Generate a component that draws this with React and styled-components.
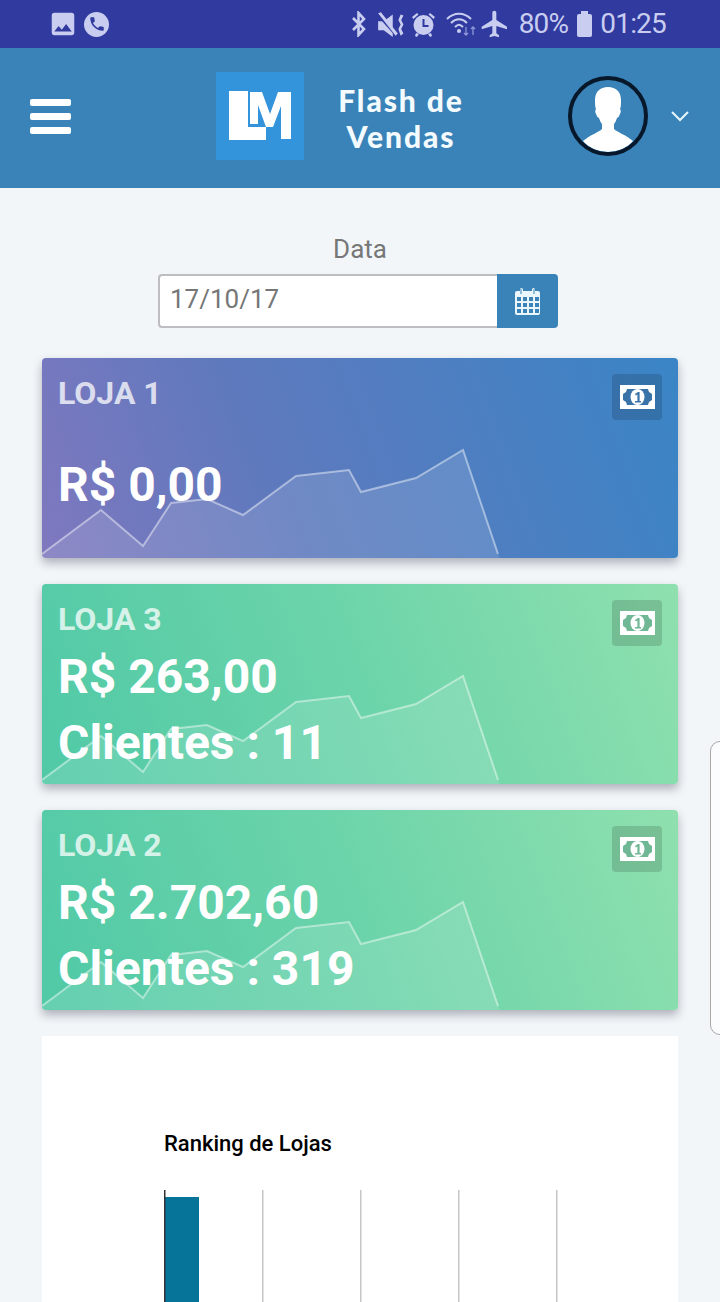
import React from 'react';
import styled, { createGlobalStyle } from 'styled-components';
import { MdImage, MdFlight, MdPhone } from 'react-icons/md';

const GlobalStyle = createGlobalStyle`
  html, body {
    margin: 0;
    padding: 0;
    height: 1302px;
    overflow: hidden;
    background: #f2f6f9;
    font-family: 'Roboto', 'Liberation Sans', sans-serif;
  }
  * { box-sizing: border-box; }
`;

const stores = [
  { name: 'LOJA 1', value: 'R$ 0,00', tone: 'blue' },
  { name: 'LOJA 3', value: 'R$ 263,00', clients: 11, tone: 'green' },
  { name: 'LOJA 2', value: 'R$ 2.702,60', clients: 319, tone: 'green' },
];

const sparkPoints = '0,196 59,152 101,188 129,145 165,141 201,157 254,118 307,112 319,134 374,120 421,92 456,196';

const Wave = () => (
  <Spark viewBox="0 0 636 200">
    <polygon points={`0,200 ${sparkPoints} 458,200`} fill="rgba(255,255,255,.12)" />
    <polyline points={sparkPoints} fill="none" stroke="rgba(255,255,255,.45)" strokeWidth="2" />
  </Spark>
);

const MoneyIcon = ({ tone }) => (
  <svg width="35" height="24" viewBox="0 0 35 24">
    <rect width="35" height="24" fill="#fff" />
    <path
      d="M7 4h21l1 3 3 2v6l-3 2-1 3H7l-1-3-3-2V9l3-2z"
      fill={tone === 'blue' ? '#3a73a8' : '#6fb795'}
    />
    <ellipse cx="17.5" cy="12" rx="7" ry="8" fill="#fff" />
    <path d="M15 9l3-2h1.6v9H21v1.6h-6V16h2.4V9.4L15.800 10.600z" fill={tone === 'blue' ? '#3a73a8' : '#6fb795'} />
  </svg>
);

const CalendarIcon = () => (
  <svg width="25" height="27" viewBox="0 0 25 27" fill="#eaf6fc">
    <path d="M2 3h3V1.500a1.500 1.500 0 0 1 3 0V3h9V1.500a1.500 1.500 0 0 1 3 0V3h3a2 2 0 0 1 2 2v20a2 2 0 0 1-2 2H2a2 2 0 0 1-2-2V5a2 2 0 0 1 2-2z" />
    <g fill="#3a83b9">
      {[9, 15, 21].map(y =>
        [2, 8, 14, 20].map(x => <rect key={`${x}-${y}`} x={x} y={y} width="4" height="4" />)
      )}
      <rect x="5.500" y="1" width="1" height="5" />
      <rect x="18.500" y="1" width="1" height="5" />
    </g>
  </svg>
);

const Avatar = () => (
  <AvatarRing>
    <svg width="72" height="72" viewBox="0 0 72 72">
      <path
        fill="#fff"
        d="M36 7c-8 0-13 5-13 13 0 4 0 7 1 9-1 1-1 3 0 5 1 2 1 3 3 4 1 3 2 5 3 6v5c-3 3-12 6-19 12 6 7 15 11 25 11s19-4 25-11c-7-6-16-9-19-12v-5c1-1 2-3 3-6 2-1 2-2 3-4 1-2 1-4 0-5 1-2 1-5 1-9 0-8-5-13-13-13z"
      />
    </svg>
  </AvatarRing>
);

const App = () => (
  <Page>
    <GlobalStyle />
    <StatusBar>
      <StatusGroup>
        <MdImage size={30} style={{ margin: '0 -3px' }} />
        <PhoneBadge><MdPhone size={18} /></PhoneBadge>
      </StatusGroup>
      <StatusGroup>
        <Glyph $gap={0} width="16" height="26" viewBox="0 0 16 26">
          <path d="M2 7l11 11-5.500 6V2L13 8 2 19" fill="none" stroke="#c9cdf0" strokeWidth="2.600" />
        </Glyph>
        <Glyph $gap={10} width="27" height="25" viewBox="0 0 24 22" fill="#c9cdf0">
          <path d="M1 8h5l8-6v20l-8-6H1z" />
          <path d="M0 2l2-2 17 19-2 2z" fill="#303a9f" transform="translate(0 1)" />
          <path d="M1 1l2.500-1 15 19-2 2z" />
          <path d="M21 2l2.500 1-2 4 2 4-2 4 2 4-2.500 2-2-6 2-4-2-4z" />
        </Glyph>
        <Glyph $gap={7} width="25" height="26" viewBox="0 0 25 26" fill="#c9cdf0">
          <circle cx="12.500" cy="14" r="10" />
          <path d="M1 6l5-4 1.500 1.500-5 4.500zM24 6l-5-4-1.500 1.500 5 4.500zM5 22l3 1-2 3-2-1zM20 22l-3 1 2 3 2-1z" />
          <path d="M12.500 8v7h5" fill="none" stroke="#303a9f" strokeWidth="2" />
        </Glyph>
        <Glyph $gap={10} width="31" height="26" viewBox="0 0 31 26" fill="none" stroke="#c9cdf0" strokeWidth="2">
          <path d="M1 8c7-7 17-7 24 0M5 12c5-5 11-5 16 0M9 16c3-3 5-3 8 0" />
          <circle cx="13" cy="20" r="2" fill="#c9cdf0" stroke="none" />
          <path d="M20 16v8M18 22l2 2 2-2M27 24v-8M25 18l2-2 2 2" strokeWidth="1.300" stroke="#8f97d8" />
        </Glyph>
        <MdFlight size={32} style={{ margin: '0 -3px 0 2px' }} />
        <StatusText $gap={11}>80%</StatusText>
        <Battery />
        <StatusText $gap={8}>01:25</StatusText>
      </StatusGroup>
    </StatusBar>

    <Header>
      <Burger><span /><span /><span /></Burger>
      <Logo>
        <svg width="88" height="88" viewBox="0 0 88 88" fill="#fff">
          <path d="M13 19h19v36h18v13H13z" />
          <path d="M34 20h12l8 22 8-22h13v47H65V34l-8 21h-7l-8-22v19h-8z" />
        </svg>
      </Logo>
      <AppTitle><span>Flash de</span><span>Vendas</span></AppTitle>
      <Avatar />
      <Chevron viewBox="0 0 20 14">
        <path d="M2 3l8 8 8-8" fill="none" stroke="#e8f6fc" strokeWidth="2" />
      </Chevron>
    </Header>

    <Content>
      <DateField>
        <DateLabel>Data</DateLabel>
        <DateRow>
          <DateInput readOnly value="17/10/17" />
          <DateButton><CalendarIcon /></DateButton>
        </DateRow>
      </DateField>

      <CardList>
        {stores.map(store => (
          <StoreCard key={store.name} $tone={store.tone}>
            <CardHead>
              <StoreName>{store.name}</StoreName>
              <IconBox><MoneyIcon tone={store.tone} /></IconBox>
            </CardHead>
            <Amount $alone={store.clients === undefined}>{store.value}</Amount>
            {store.clients !== undefined && <Amount>Clientes : {store.clients}</Amount>}
            <Wave />
          </StoreCard>
        ))}
      </CardList>

      <ChartPanel>
        <ChartTitle>Ranking de Lojas</ChartTitle>
        <svg width="420" height="112" viewBox="0 0 420 112">
          {[98, 196, 294, 392].map(x => (
            <rect key={x} x={x} y="0" width="1.500" height="112" fill="#c6c6c6" />
          ))}
          <rect x="1" y="7" width="34" height="105" fill="#067399" />
          <rect x="0" y="0" width="1.500" height="112" fill="#333" />
        </svg>
      </ChartPanel>
    </Content>

    <EdgeHandle />
  </Page>
);

const Page = styled.div`
  position: relative;
  width: 720px;
  height: 1302px;
  overflow: hidden;
  background: #f2f6f9;
`;

const StatusBar = styled.div`
  height: 48px;
  background: #303a9f;
  color: #c9cdf0;
  display: flex;
  align-items: center;
  justify-content: space-between;
  padding: 0 54px 0 51px;
`;

const StatusGroup = styled.div`
  display: flex;
  align-items: center;
  gap: 0;
  svg { flex: none; }
`;

const Glyph = styled.svg`
  margin-left: ${p => p.$gap}px;
`;

const PhoneBadge = styled.span`
  width: 25px;
  height: 25px;
  margin-left: 9px;
  border-radius: 50%;
  background: #c9cdf0;
  color: #303a9f;
  display: flex;
  align-items: center;
  justify-content: center;
`;

const StatusText = styled.span`
  margin-left: ${p => p.$gap}px;
  font-size: 28px;
  line-height: 48px;
  letter-spacing: -0.8px;
`;

const Battery = styled.span`
  position: relative;
  width: 15px;
  height: 23px;
  margin: 2px 0 0 9px;
  border-radius: 2px;
  background: #c9cdf0;
  &::before {
    content: '';
    position: absolute;
    top: -3px;
    left: 4px;
    width: 7px;
    height: 3px;
    background: #c9cdf0;
  }
`;

const Header = styled.header`
  height: 140px;
  background: #3a83b9;
  display: grid;
  grid-template-columns: 186px 88px 1fr 80px 72px;
  align-items: center;
  padding: 0 0 4px 30px;
`;

const Burger = styled.div`
  width: 41px;
  display: flex;
  flex-direction: column;
  gap: 7px;
  span {
    display: block;
    height: 7px;
    border-radius: 2px;
    background: #fff;
  }
`;

const Logo = styled.div`
  width: 88px;
  height: 88px;
  background: #3393db;
  display: flex;
`;

const AppTitle = styled.h1`
  margin: 3px 70px 0 0;
  color: #f4fbfe;
  font-family: 'Lato', 'Noto Sans', sans-serif;
  font-weight: 900;
  font-size: 30px;
  letter-spacing: 1.9px;
  text-align: center;
  span {
    display: block;
    height: 36px;
    line-height: 36px;
  }
`;

const AvatarRing = styled.div`
  width: 80px;
  height: 80px;
  border-radius: 50%;
  border: 4px solid #07182b;
  overflow: hidden;
  display: flex;
  align-items: flex-end;
  justify-content: center;
`;

const Chevron = styled.svg`
  width: 20px;
  height: 14px;
  justify-self: start;
  margin-left: 22px;
`;

const Content = styled.main`
  padding: 46px 42px 0;
`;

const DateField = styled.div`
  width: 404px;
  margin: 0 auto;
  display: flex;
  flex-direction: column;
  align-items: center;
`;

const DateLabel = styled.label`
  color: #777;
  font-size: 26px;
  line-height: 30px;
`;

const DateRow = styled.div`
  align-self: flex-start;
  margin-top: 10px;
  display: flex;
  height: 54px;
  width: 400px;
`;

const DateInput = styled.input`
  width: 339px;
  height: 54px;
  padding: 0 10px 4px;
  border: 2px solid #bdbdc2;
  border-right: 0;
  border-radius: 4px 0 0 4px;
  background: #fff;
  color: #777;
  font-family: inherit;
  font-size: 26px;
  outline: none;
`;

const DateButton = styled.div`
  width: 61px;
  height: 54px;
  background: #3a83b9;
  border-radius: 0 4px 4px 0;
  display: flex;
  align-items: center;
  justify-content: center;
`;

const CardList = styled.div`
  margin-top: 30px;
  display: flex;
  flex-direction: column;
  gap: 26px;
`;

const StoreCard = styled.section`
  position: relative;
  height: 200px;
  padding: 16px;
  border-radius: 4px;
  overflow: hidden;
  color: #fff;
  background: ${p => p.$tone === 'blue'
    ? 'linear-gradient(70deg, #7f78bf 0%, #5f79bd 35%, #3a85c6 100%)'
    : 'linear-gradient(70deg, #50c9a6 0%, #6cd4aa 50%, #8fe0ae 100%)'};
  box-shadow: 0 5px 10px rgba(50, 50, 70, .35);
`;

const CardHead = styled.div`
  display: flex;
  justify-content: space-between;
  align-items: flex-start;
`;

const StoreName = styled.div`
  font-size: 32px;
  font-weight: 700;
  line-height: 38px;
  opacity: .75;
`;

const IconBox = styled.div`
  width: 50px;
  height: 46px;
  border-radius: 4px;
  background: rgba(0, 0, 0, .14);
  display: flex;
  align-items: center;
  justify-content: center;
`;

const Amount = styled.div`
  font-size: 48px;
  font-weight: 700;
  line-height: 66px;
  &:nth-child(2) { margin-top: ${p => (p.$alone ? '32px' : '-2px')}; }
`;

const Spark = styled.svg`
  position: absolute;
  inset: 0;
  width: 636px;
  height: 200px;
  pointer-events: none;
`;

const ChartPanel = styled.section`
  margin-top: 26px;
  height: 400px;
  background: #fff;
  padding: 96px 0 0 122px;
`;

const ChartTitle = styled.div`
  color: #000;
  font-size: 22px;
  font-weight: 500;
  line-height: 24px;
  margin-bottom: 34px;
`;

const EdgeHandle = styled.div`
  position: absolute;
  left: 710px;
  top: 741px;
  width: 20px;
  height: 294px;
  border: 1px solid #a8a8a8;
  border-radius: 10px;
  background: #fbfcfd;
`;

export default App;
